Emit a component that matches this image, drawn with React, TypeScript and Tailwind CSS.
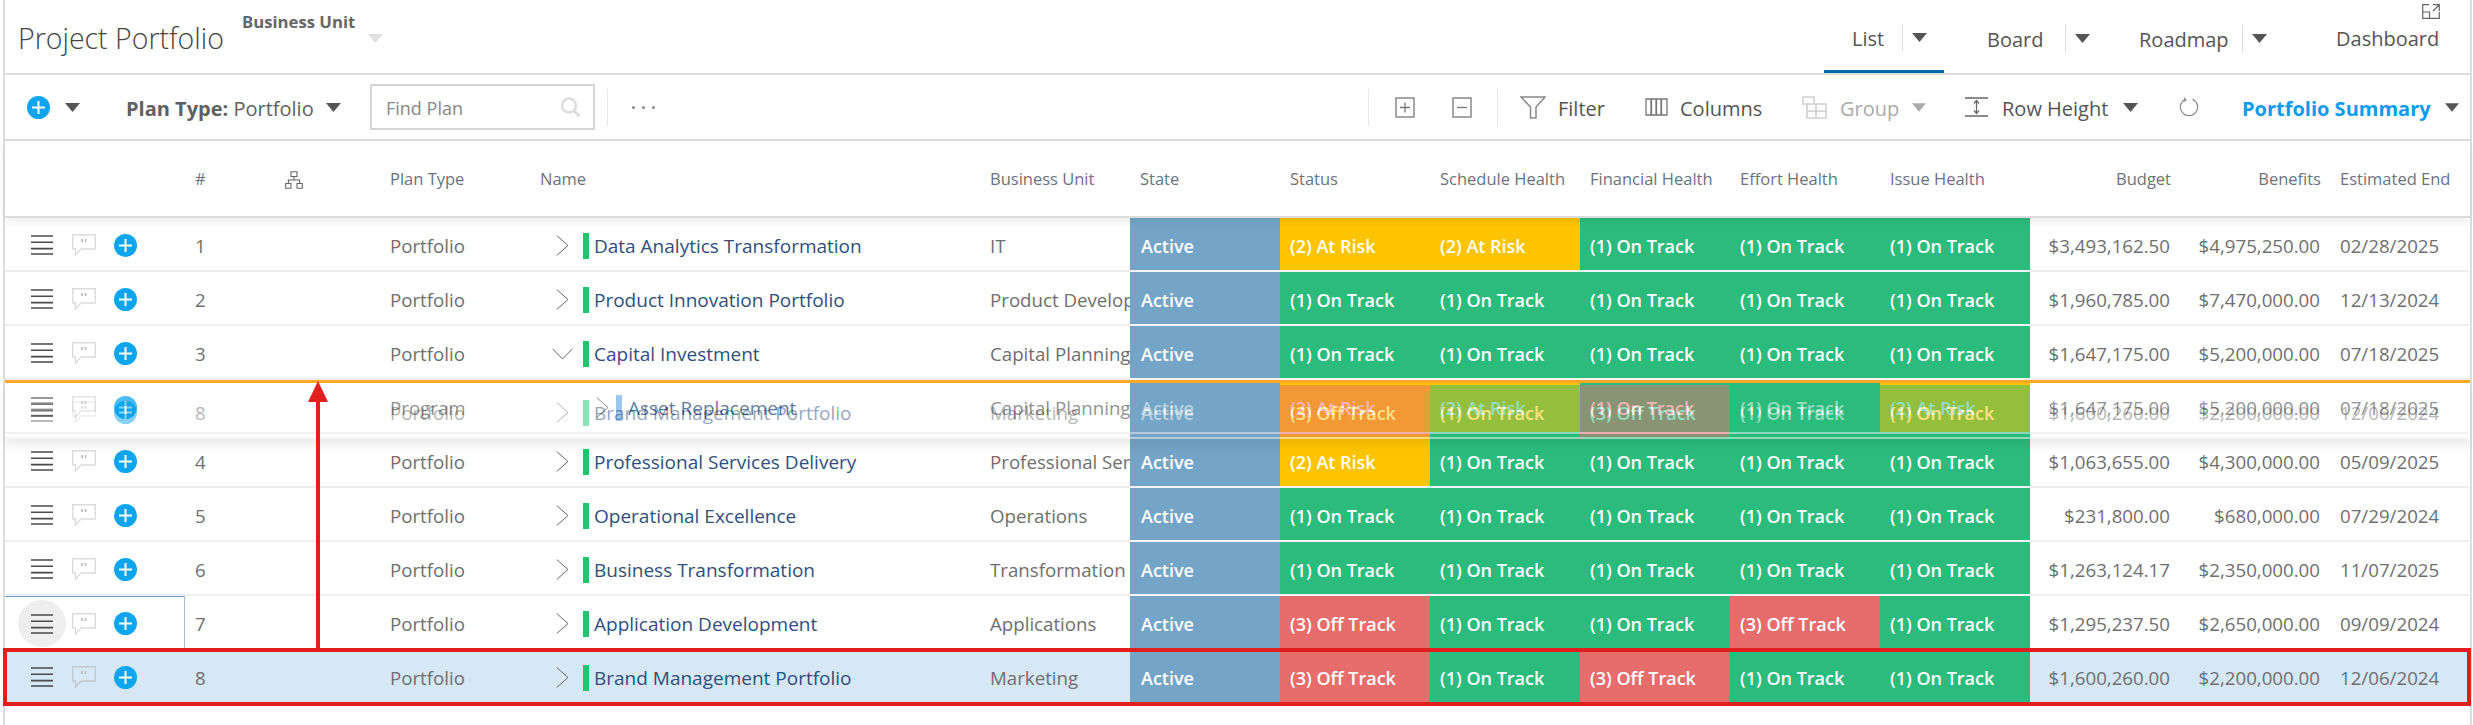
import React from "react";

type St = "on" | "risk" | "off" | "yel";
const stCls: Record<St, string> = {
  on: "bg-[#2bbc7d]",
  risk: "bg-[#ffc400]",
  yel: "bg-[#ffc400]",
  off: "bg-[#e76d6d]",
};
const stTxt: Record<St, string> = {
  on: "(1) On Track",
  risk: "(2) At Risk",
  yel: "(2) At Risk",
  off: "(3) Off Track",
};

function Caret({ c = "#555555", w = 15 }: { c?: string; w?: number }) {
  return (
    <svg width={w} height="9" viewBox="0 0 15 9" className="shrink-0">
      <path d="M0 0H15L7.5 9Z" fill={c} />
    </svg>
  );
}
function PlusIcon() {
  return (
    <svg width="23" height="23" viewBox="0 0 23 23" className="shrink-0">
      <circle cx="11.5" cy="11.5" r="11.5" fill="#0ea5ef" />
      <path d="M11.5 5V18M5 11.5H18" stroke="#fff" strokeWidth="2" />
    </svg>
  );
}
function Burger() {
  return (
    <svg width="22" height="20" viewBox="0 0 22 20" className="shrink-0">
      <path d="M0 1H22M0 7.3H22M0 13.6H22M0 19H22" stroke="#4a4a4a" strokeWidth="1.6" />
    </svg>
  );
}
function Comment({ dark }: { dark?: boolean }) {
  const s = dark ? "#c4c9ce" : "#dcdcdc";
  return (
    <svg width="24" height="22" viewBox="0 0 24 22" className="shrink-0">
      <path d="M.7.7H23.3V15H9L3.5 21V15H.7Z" fill="none" stroke={s} strokeWidth="1.4" />
      <path d="M10 5V8M13.5 5V8" stroke="#b5b5b5" strokeWidth="1.5" />
    </svg>
  );
}
function Chev({ down }: { down?: boolean }) {
  return down ? (
    <svg width="21" height="12" viewBox="0 0 21 12" className="ml-[1px]">
      <path d="M.5.7L10.5 11L20.5.7" fill="none" stroke="#666" strokeWidth="1" />
    </svg>
  ) : (
    <svg width="13" height="21" viewBox="0 0 13 21" className="ml-[5px]">
      <path d="M.7.5L12 10.5L.7 20.5" fill="none" stroke="#666" strokeWidth="1" />
    </svg>
  );
}

type RowData = {
  n: string;
  type?: string;
  name: string;
  bu: string;
  st: St[];
  budget: string;
  benefits: string;
  end: string;
};

const O: St = "on";
const rows: RowData[] = [
  { n: "1", name: "Data Analytics Transformation", bu: "IT", st: ["risk", "risk", O, O, O], budget: "$3,493,162.50", benefits: "$4,975,250.00", end: "02/28/2025" },
  { n: "2", name: "Product Innovation Portfolio", bu: "Product Development", st: [O, O, O, O, O], budget: "$1,960,785.00", benefits: "$7,470,000.00", end: "12/13/2024" },
  { n: "3", name: "Capital Investment", bu: "Capital Planning", st: [O, O, O, O, O], budget: "$1,647,175.00", benefits: "$5,200,000.00", end: "07/18/2025" },
  { n: "4", name: "Professional Services Delivery", bu: "Professional Services", st: ["risk", O, O, O, O], budget: "$1,063,655.00", benefits: "$4,300,000.00", end: "05/09/2025" },
  { n: "5", name: "Operational Excellence", bu: "Operations", st: [O, O, O, O, O], budget: "$231,800.00", benefits: "$680,000.00", end: "07/29/2024" },
  { n: "6", name: "Business Transformation", bu: "Transformation", st: [O, O, O, O, O], budget: "$1,263,124.17", benefits: "$2,350,000.00", end: "11/07/2025" },
  { n: "7", name: "Application Development", bu: "Applications", st: ["off", O, O, "off", O], budget: "$1,295,237.50", benefits: "$2,650,000.00", end: "09/09/2024" },
];
const row8: RowData = { n: "8", name: "Brand Management Portfolio", bu: "Marketing", st: ["off", O, "off", O, O], budget: "$1,600,260.00", benefits: "$2,200,000.00", end: "12/06/2024" };
const program: RowData = { n: "", type: "Program", name: "Asset Replacement", bu: "Capital Planning", st: ["risk", "risk", O, O, "risk"], budget: "$1,647,175.00", benefits: "$5,200,000.00", end: "07/18/2025" };

const plain = "h-[54px] border-b-2 border-[#eeeeee] flex items-center shrink-0 pt-[5px]";
const colored = "h-[54px] border-b-2 border-[#f4f4f4] flex items-center shrink-0 pt-[5px] text-white font-semibold w-[150px] whitespace-nowrap text-[18px]";

function Row({ d, focused, down, child, bg = "", dark }: { d: RowData; focused?: boolean; down?: boolean; child?: boolean; bg?: string; dark?: boolean }) {
  return (
    <div className={`flex h-[54px] text-[18.7px] text-[#6f6f6f] ${bg}`}>
      <div className={`${plain} w-[180px] relative ${focused ? "border-t border-t-[#6ea0d8] border-r border-r-[#a9bdd4]" : ""}`}>
        {focused && <div className="absolute left-[13px] top-[3px] w-[48px] h-[47px] rounded-full bg-[#eeeeee]" />}
        <div className="relative flex items-center pl-[26px] -mt-[3px]">
          <Burger />
          <div className="ml-[19px]"><Comment dark={dark} /></div>
          <div className="ml-[18px]"><PlusIcon /></div>
        </div>
      </div>
      <div className={`${plain} w-[205px] pl-[10px]`}>{d.n}</div>
      <div className={`${plain} w-[161px]`}>{d.type ?? "Portfolio"}</div>
      <div className={`${plain} w-[439px]`}>
        {child ? (
          <>
            <div className="ml-[40px] -mt-[2px]"><Chev /></div>
            <div className="w-[6px] h-[26px] bg-[#7db6e8] ml-[7px] -mt-[2px]" />
            <span className="ml-[6px] font-medium text-[#2f4f7d] whitespace-nowrap text-[19px]">{d.name}</span>
          </>
        ) : (
          <>
            <div className="w-[32px] flex items-center -mt-[2px]"><Chev down={down} /></div>
            <div className="w-[6px] h-[26px] bg-[#22c56e] -mt-[2px]" />
            <span className="ml-[5px] font-medium text-[#2f4f7d] whitespace-nowrap text-[19px]">{d.name}</span>
          </>
        )}
      </div>
      <div className={`${plain} w-[140px] overflow-hidden whitespace-nowrap`}>{d.bu}</div>
      <div className={`${colored} bg-[#74a5c6] pl-[11px]`}>Active</div>
      {d.st.map((s, i) => (
        <div key={i} className={`${colored} ${stCls[s]} pl-[10px]`}>{stTxt[s]}</div>
      ))}
      <div className={`${plain} w-[140px] justify-end`}>{d.budget}</div>
      <div className={`${plain} w-[150px] justify-end`}>{d.benefits}</div>
      <div className={`${plain} w-[149px] pl-[20px]`}>{d.end}</div>
    </div>
  );
}

function Tab({ label, cls }: { label: string; cls: string }) {
  return (
    <div className={`flex items-center text-[#555] text-[20px] h-full pt-[7px] ${cls}`}>
      <span className="whitespace-nowrap">{label}</span>
    </div>
  );
}
function TabSep({ cls }: { cls: string }) {
  return (
    <div className={`flex items-center h-full pt-[4px] ${cls}`}>
      <div className="w-px h-[27px] bg-[#dddddd] mr-[9px]" />
      <Caret />
    </div>
  );
}

function Sep({ cls }: { cls: string }) {
  return <div className={`w-px h-[37px] bg-[#e8e8e8] shrink-0 ${cls}`} />;
}

export default function App() {
  return (
    <div className="relative w-[2473px] h-[725px] bg-white overflow-hidden font-['Open_Sans',sans-serif]">
      <div className="ml-[3px] w-[2469px] h-[725px] border-x-2 border-[#dddddd]">
        {/* Title bar */}
        <div className="relative flex h-[75px] border-b-2 border-[#dddddd]">
          <div className="ml-[13px] w-[224px] pt-[18px] text-[28.5px] font-light text-[#444] whitespace-nowrap leading-[40px]">Project Portfolio</div>
          <div className="relative w-[150px]">
            <div className="pt-[10px] text-[16.7px] font-bold text-[#666] whitespace-nowrap leading-[24px]">Business Unit</div>
            <div className="absolute left-[126px] top-[34px]"><Caret c="#e0e0e0" /></div>
          </div>
          <div className="ml-auto flex h-full">
            <div className="flex w-[120px] h-[73px] border-b-[3px] border-[#006ead]">
              <Tab label="List" cls="ml-[28px] w-[50px]" />
              <TabSep cls="" />
            </div>
            <Tab label="Board" cls="ml-[43px] w-[78px]" />
            <TabSep cls="" />
            <Tab label="Roadmap" cls="ml-[49px] w-[103px]" />
            <TabSep cls="" />
            <Tab label="Dashboard" cls="ml-[69px] w-[134px] -mt-[1px]" />
          </div>
          <svg width="18" height="15" viewBox="0 0 18 15" className="absolute left-[2417px] top-[4px]">
            <path d="M7 .7H.7V14.3H17.3V8M17.3 7V.7H11M17 1L11 7M.7 8H7.5V14.3" fill="none" stroke="#666" strokeWidth="1.2" />
          </svg>
        </div>

        {/* Toolbar */}
        <div className="flex items-center h-[66px] border-b-2 border-[#dddddd] text-[20px] text-[#555]">
          <div className="ml-[22px]"><PlusIcon /></div>
          <div className="ml-[15px]"><Caret /></div>
          <div className="ml-[46px] w-[200px] pt-[3px] whitespace-nowrap text-[#606060]"><b className="font-bold">Plan Type:</b> Portfolio</div>
          <Caret />
          <div className="ml-[29px] w-[225px] h-[46px] border-2 border-[#d6d6d6] flex items-center pl-[14px] pr-[12px] shrink-0 text-[#888] text-[18px]">
            <span className="pt-[3px]">Find Plan</span>
            <svg width="21" height="20" viewBox="0 0 21 20" className="ml-auto">
              <circle cx="9" cy="8.5" r="7" fill="none" stroke="#dddddd" strokeWidth="2.6" />
              <path d="M14 14L19.5 19" stroke="#dddddd" strokeWidth="3" />
            </svg>
          </div>
          <Sep cls="ml-[12px]" />
          <div className="ml-[24px] flex gap-[7px] shrink-0">
            <div className="w-[3px] h-[3px] bg-[#888] rounded-full" />
            <div className="w-[3px] h-[3px] bg-[#888] rounded-full" />
            <div className="w-[3px] h-[3px] bg-[#888] rounded-full" />
          </div>
          <Sep cls="ml-[713px]" />
          <svg width="20" height="21" viewBox="0 0 20 21" className="ml-[26px] shrink-0">
            <rect x="1" y="1" width="18" height="19" fill="none" stroke="#909090" strokeWidth="1.6" />
            <path d="M10 5.5V15.5M5 10.5H15" stroke="#777" strokeWidth="1.3" />
          </svg>
          <svg width="20" height="21" viewBox="0 0 20 21" className="ml-[37px] shrink-0">
            <rect x="1" y="1" width="18" height="19" fill="none" stroke="#909090" strokeWidth="1.6" />
            <path d="M5 10.5H15" stroke="#777" strokeWidth="1.3" />
          </svg>
          <Sep cls="ml-[25px]" />
          <svg width="26" height="23" viewBox="0 0 26 23" className="ml-[22px] shrink-0">
            <path d="M1 1H25L16 11V22H10.5V11Z" fill="none" stroke="#888" strokeWidth="1.5" />
          </svg>
          <span className="ml-[12px] w-[87px] pt-[3px] shrink-0">Filter</span>
          <svg width="23" height="18" viewBox="0 0 23 18" className="shrink-0">
            <path d="M1 1H6V17H1ZM6.5 1H11V17H6.5ZM11.5 1H16V17H11.5ZM16.5 1H22V17H16.5Z" fill="none" stroke="#777" strokeWidth="1.3" />
          </svg>
          <span className="ml-[12px] w-[122px] pt-[3px] shrink-0">Columns</span>
          <svg width="25" height="23" viewBox="0 0 25 23" className="shrink-0">
            <path d="M1 1H12V8H1ZM1 8H5V22H24V8H12M5 15H24M14 8V22" fill="none" stroke="#d0d0d0" strokeWidth="1.6" />
          </svg>
          <span className="ml-[13px] w-[72px] pt-[3px] shrink-0 text-[#aaaaaa]">Group</span>
          <Caret c="#aaaaaa" w={14} />
          <svg width="23" height="20" viewBox="0 0 23 20" className="ml-[39px] shrink-0">
            <path d="M0 1H23M0 19H23" stroke="#666" strokeWidth="1.6" />
            <path d="M11.5 4V16M9 6.5L11.5 3.5L14 6.5M9 13.5L11.5 16.5L14 13.5" fill="none" stroke="#666" strokeWidth="1.2" />
          </svg>
          <span className="ml-[14px] w-[121px] pt-[3px] shrink-0 whitespace-nowrap">Row Height</span>
          <Caret />
          <svg width="20" height="20" viewBox="0 0 20 20" className="ml-[41px] shrink-0">
            <path d="M6.5 2.2A8.6 8.6 0 1 0 13.5 2.2" fill="none" stroke="#888" strokeWidth="1.2" />
            <path d="M5 .5L7 3L4.5 4.5" fill="none" stroke="#888" strokeWidth="1.2" />
          </svg>
          <span className="ml-[43px] w-[203px] pt-[3px] shrink-0 font-bold text-[#0e9bee] whitespace-nowrap">Portfolio Summary</span>
          <Caret w={14} />
        </div>

        {/* Header */}
        <div className="relative z-10 flex items-center h-[77px] pt-[2px] border-b-2 border-[#dddddd] shadow-[0_4px_8px_rgba(0,0,0,0.07)] bg-white text-[16.5px] text-[#6b7280] whitespace-nowrap">
          <div className="w-[190px] shrink-0" />
          <div className="w-[90px] shrink-0">#</div>
          <svg width="18" height="18" viewBox="0 0 18 18" className="shrink-0">
            <path d="M6 .7H12V5.5H6ZM.7 12.5H6V17.3H.7ZM12 12.5H17.3V17.3H12ZM9 5.5V9M3.4 12.5V9H14.6V12.5" fill="none" stroke="#666" strokeWidth="1.1" />
          </svg>
          <div className="ml-[87px] w-[150px] shrink-0">Plan Type</div>
          <div className="w-[450px] shrink-0">Name</div>
          <div className="w-[150px] shrink-0">Business Unit</div>
          <div className="w-[150px] shrink-0">State</div>
          <div className="w-[150px] shrink-0">Status</div>
          <div className="w-[150px] shrink-0">Schedule Health</div>
          <div className="w-[150px] shrink-0">Financial Health</div>
          <div className="w-[150px] shrink-0">Effort Health</div>
          <div className="w-[150px] shrink-0">Issue Health</div>
          <div className="w-[131px] shrink-0 text-right">Budget</div>
          <div className="w-[150px] shrink-0 text-right">Benefits</div>
          <div className="ml-[19px] shrink-0">Estimated End</div>
        </div>

        {/* Rows */}
        <Row d={rows[0]} />
        <Row d={rows[1]} />
        <Row d={rows[2]} down />
        <div className="relative z-20 h-[54px]">
          <div className="bg-white"><Row d={program} child /></div>
          <div className="absolute left-0 right-0 top-[5px] bg-white/50 opacity-50 shadow-[0_6px_8px_rgba(0,0,0,0.15)]">
            <Row d={row8} />
          </div>
          <div className="absolute left-0 right-0 top-0 h-[3px] bg-[#ffa726]" />
        </div>
        <Row d={rows[3]} />
        <Row d={rows[4]} />
        <Row d={rows[5]} />
        <Row d={rows[6]} focused />
        <Row d={row8} bg="bg-[#d6e7f5]" dark />
      </div>

      {/* Annotations */}
      <div className="absolute z-30 left-[3px] top-[648px] w-[2468px] h-[58px] border-[4px] border-[#e21f1f]" />
      <svg width="22" height="267" viewBox="0 0 22 267" className="absolute z-30 left-[307px] top-[381px]">
        <path d="M11 0L21 21H1Z" fill="#e21f1f" />
        <path d="M11 18V267" stroke="#e21f1f" strokeWidth="4" />
      </svg>
    </div>
  );
}
